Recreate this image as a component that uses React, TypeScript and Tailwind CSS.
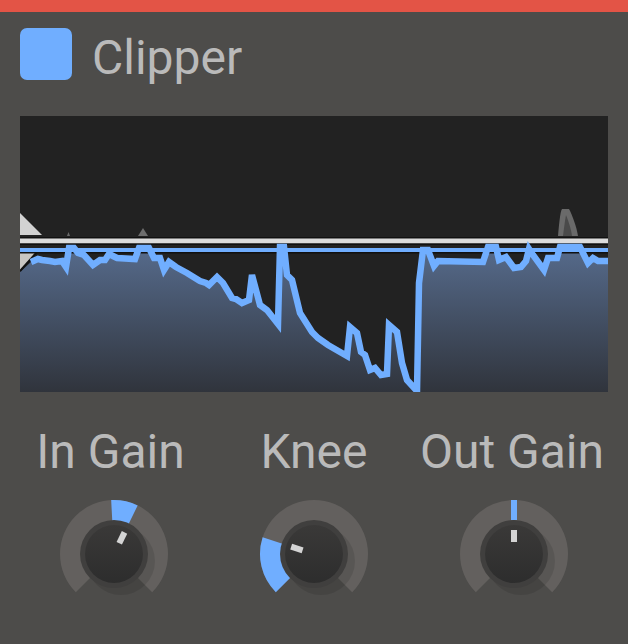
const LINE = '31,262 38,259 42,260 50,261 55,262 62,261 66,267 69,248 74,248 78,253 84,255 93,265 100,260 105,260 109,254 117,258 135,259 139,248 149,248 154,258 160,258 164,270 169,262 176,267 187,273 200,281 206,283 209,285 217,277 223,283 232,298 236,299 242,303 249,300 252,275 260,305 267,310 278,324 280,247 284,247 287,275 292,280 300,313 312,332 318,338 328,345 347,356 350,327 357,333 361,352 365,355 370,370 375,368 381,375 387,374 389,325 397,332 402,363 407,380 417,391 419,283 423,250 428,250 434,266 438,261 483,262 488,247 496,247 499,260 506,257 514,268 521,267 526,261 529,249 533,255 544,270 548,258 557,258 560,247 580,247 588,263 593,258 598,261 608,261'

function Chart() {
  return (
    <svg width="588" height="276" viewBox="20 116 588 276" className="block">
      <defs>
        <linearGradient id="fillGrad" x1="0" y1="0" x2="0" y2="1">
          <stop offset="0" stopColor="#566b8c" />
          <stop offset="1" stopColor="#30343c" />
        </linearGradient>
      </defs>
      <rect x="20" y="116" width="588" height="276" fill="#222222" />
      {/* gain reduction ghost peaks */}
      <path d="M67 236 L68.500 232 L70 236 Z" fill="#6b6b6b" />
      <path d="M138 236 L143 228 L148 236 Z" fill="#6e6e6e" />
      <path d="M558 236 C559 226 560 212 562 209 L569 209 C572 214 577 228 578 236 Z" fill="#6a6a6a" />
      <path d="M563 236 C564 228 565 220 566 215 C568 220 571 228 572 236 Z" fill="#4a4a4a" />
      <polygon points="20,213 42,235 20,235" fill="#d2d2d2" />
      <polygon points={`20,272 ${LINE} 608,392 20,392`} fill="url(#fillGrad)" />
      <polygon points="20,252 37,252 20,270" fill="#c9c6c2" />
      <line x1="37" y1="252" x2="20" y2="271" stroke="#111111" strokeWidth="2" />
      <rect x="20" y="237" width="588" height="1.500" fill="#111111" />
      <rect x="20" y="238.500" width="588" height="5" fill="#dcdcdc" />
      <rect x="20" y="243.500" width="588" height="1.500" fill="#111111" />
      <rect x="20" y="248" width="588" height="4" fill="#70aeff" />
      <rect x="20" y="252" width="588" height="1.500" fill="#111111" />
      <polyline points={LINE} fill="none" stroke="#70aeff" strokeWidth="6.500" strokeLinejoin="miter" strokeMiterlimit="4" />
    </svg>
  )
}

function polar(r: number, deg: number) {
  const a = (deg * Math.PI) / 180
  return `${(70 + r * Math.sin(a)).toFixed(2)} ${(70 - r * Math.cos(a)).toFixed(2)}`
}

function arc(r1: number, r2: number, from: number, to: number) {
  const large = to - from > 180 ? 1 : 0
  return `M${polar(r1, from)} A${r1} ${r1} 0 ${large} 1 ${polar(r1, to)} L${polar(r2, to)} A${r2} ${r2} 0 ${large} 0 ${polar(r2, from)} Z`
}

function Knob({ id, label, labelClass, from, to, angle }: { id: string; label: string; labelClass: string; from: number; to: number; angle: number }) {
  return (
    <div className="flex w-[200px] flex-col items-center">
      <div className={`whitespace-nowrap text-[48px] leading-[52px] text-[#bababa] ${labelClass}`}>{label}</div>
      <svg width="140" height="140" viewBox="0 0 140 140" className="mt-[6px] block">
        <defs>
          <linearGradient id={id} x1="0" y1="0" x2="0" y2="1">
            <stop offset="0" stopColor="#3a3938" />
            <stop offset="1" stopColor="#2d2d2d" />
          </linearGradient>
        </defs>
        <path d={arc(54, 30, -135, 135)} fill="#63605e" />
        <circle cx="77" cy="77" r="34" fill="#000000" opacity="0.1" />
        {from === to ? <rect x="67" y="16" width="6" height="20" fill="#70aeff" /> : <path d={arc(54, 30, from, to)} fill="#70aeff" />}
        <circle cx="70" cy="70" r="34" fill="#403f3e" />
        <circle cx="70" cy="70" r="29" fill={`url(#${id})`} />
        <rect x="67" y="46" width="6" height="12" fill="#d4d4d4" transform={`rotate(${angle} 70 70)`} />
      </svg>
    </div>
  )
}

export default function App() {
  return (
    <div className="h-[644px] w-[628px] overflow-hidden bg-[#4d4c4a] font-['Roboto',sans-serif]">
      <div className="h-3 bg-[#e35446]" />
      <div className="flex h-[104px] items-start px-5 pt-4">
        <div className="h-[52px] w-[52px] rounded-[7px] bg-[#70aeff]" />
        <div className="ml-5 mt-[2px] text-[48px] leading-[56px] text-[#bababa]">Clipper</div>
      </div>
      <div className="px-5">
        <Chart />
      </div>
      <div className="mt-[34px] flex justify-between px-[14px]">
        <Knob id="knobIn" label="In Gain" labelClass="-translate-x-[3.500px]" from={-3} to={26} angle={26} />
        <Knob id="knobKnee" label="Knee" labelClass="" from={-135} to={-72} angle={-72} />
        <Knob id="knobOut" label="Out Gain" labelClass="-translate-x-[2px]" from={0} to={0} angle={0} />
      </div>
    </div>
  )
}
